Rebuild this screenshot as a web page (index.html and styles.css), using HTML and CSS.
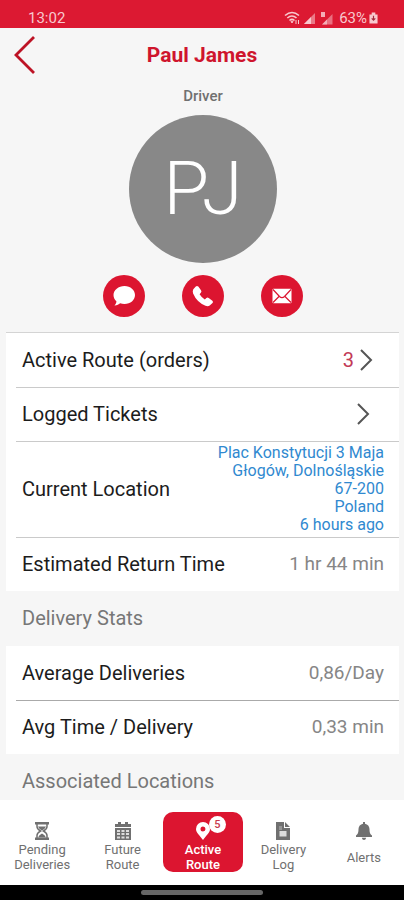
FILE: index.html
```html
<!DOCTYPE html>
<html lang="en">
<head>
<meta charset="utf-8">
<meta name="viewport" content="width=device-width, initial-scale=1">
<title>Paul James</title>
<link rel="stylesheet" href="styles.css">
</head>
<body>
<div class="status-bar">
  <span>13:02</span>
  <div class="status-icons">
    <svg width="16" height="14" viewBox="0 0 16 14" fill="none" stroke="currentColor" stroke-width="1.6" aria-hidden="true"><path d="M1 4.5Q8-1.5 15 4.5M3.3 7Q8 3 12.5 7M5.5 9.5Q8 7.2 10.5 9.5"/><path d="M7 10.3h2L8 12zM12 9v4M14.5 9v4" stroke-width="1"/></svg>
    <svg width="12" height="12" viewBox="0 0 12 12" fill="currentColor" aria-hidden="true"><path d="M0 12 11 1v11z" opacity=".55"/><path d="M0 12 7 5v7z"/></svg>
    <svg width="13" height="13" viewBox="0 0 13 13" fill="currentColor" aria-hidden="true"><path d="M1 0h4v5H1z" opacity=".85"/><path d="M2 12.500 12.500 2v10.500z" opacity=".5"/><path d="M2 12.500 7 7.500v5z" opacity=".7"/></svg>
    <span class="battery"><span>63%</span><svg width="9" height="12" viewBox="0 0 10 12" aria-hidden="true"><path d="M3 0h4v2h2.500v10h-9V2H3z" fill="currentColor"/><path d="M5 3.500v5M3 6.500l2 2 2-2" fill="none" stroke="#a22a3c" stroke-width="1.300"/></svg></span>
  </div>
</div>

<main class="content">
  <header class="title-bar">
    <button class="back" aria-label="Back"><svg width="22" height="38" viewBox="0 0 22 38" fill="none" stroke="currentColor" stroke-width="2.800" aria-hidden="true"><path d="M20 1 2 19l18 18"/></svg></button>
    <h1>Paul James</h1>
  </header>

  <section class="profile">
    <p class="role">Driver</p>
    <div class="avatar">PJ</div>
    <div class="actions">
      <button class="action" aria-label="Message"><svg width="24" height="22" viewBox="0 0 24 22" fill="currentColor" aria-hidden="true"><path d="M12.500 1c6 0 10.500 4 10.500 9s-4.500 9-10.500 9c-1.600 0-3.100-.2-4.400-.7C6.800 19.600 4.700 20.600 2.500 20.500c1.200-1.200 1.900-2.600 1.900-4.300C2.600 14.600 1.500 12.400 1.500 10c0-5 5-9 11-9z"/></svg></button>
      <button class="action" aria-label="Call"><svg width="22" height="22" viewBox="0 0 22 22" fill="currentColor" aria-hidden="true"><path d="M1.300 4.300 3.800 1.500Q5 .4 6.300 1.600L9 5.300q.9 1.200 0 2.300L7.600 9.200q2 3.300 5.200 5.200l1.600-1.400q1.100-.9 2.300 0l3.700 2.700q1.200 1.200.1 2.400l-2.800 2.500q-1.700 1-4.200.2Q4.800 17.200 1.100 8.500.3 6 1.300 4.300z"/></svg></button>
      <button class="action" aria-label="Email"><svg width="20" height="16" viewBox="0 0 20 16" aria-hidden="true"><rect x=".5" y=".8" width="19" height="14.400" rx="1" fill="currentColor"/><path d="m1 1.500 6.500 7q2.500 2.200 5 0l6.500-7M1 14.500l6.500-6.500M19 14.500l-6.500-6.500" fill="none" stroke="#dc1530" stroke-width="1.200"/></svg></button>
    </div>
  </section>

  <ul class="card card-lined">
    <li><button class="row"><span>Active Route (orders)</span><span class="count">3<svg width="13" height="22" viewBox="0 0 13 22" aria-hidden="true"><path d="m1 1 10 10L1 21"/></svg></span></button></li>
    <li><button class="row"><span>Logged Tickets</span><span class="open"><svg width="13" height="22" viewBox="0 0 13 22" aria-hidden="true"><path d="m1 1 10 10L1 21"/></svg></span></button></li>
    <li class="row row-tall"><span>Current Location</span><a class="address" href="#location">Plac Konstytucji 3 Maja<br>Głogów, Dolnośląskie<br>67-200<br>Poland<br>6 hours ago</a></li>
    <li class="row"><span>Estimated Return Time</span><span class="value">1 hr 44 min</span></li>
  </ul>

  <h2>Delivery Stats</h2>
  <ul class="card card-stats">
    <li class="row"><span>Average Deliveries</span><span class="value">0,86/Day</span></li>
    <li class="row"><span>Avg Time / Delivery</span><span class="value">0,33 min</span></li>
  </ul>

  <h2>Associated Locations</h2>
</main>

<nav class="tabs">
  <a class="tab" href="#pending"><svg width="14" height="18" viewBox="0 0 14 18" aria-hidden="true"><path d="M0 0h14v2.500H0zM0 15.500h14V18H0z" fill="currentColor"/><path d="M2 2v2.500Q2 7 5.500 9 2 11 2 13.500V16M12 2v2.500Q12 7 8.500 9q3.500 2 3.500 4.500V16" fill="none" stroke="currentColor" stroke-width="1.500"/><path d="M3 4.500h8Q10 7 7 8.500 4 7 3 4.500zM3 15.500Q4 13 7 11.500q3 1.500 4 4z" fill="currentColor"/></svg><span>Pending<br>Deliveries</span></a>
  <a class="tab" href="#future"><svg width="16" height="18" viewBox="0 0 16 18" aria-hidden="true"><path d="M3 0h3v2h4V0h3v2h3v3H0V2h3zM0 6h16v12H0z" fill="currentColor"/><path d="M2 8h3v2H2zM6.500 8h3v2h-3zM11 8h3v2h-3zM2 11h3v2H2zM6.500 11h3v2h-3zM11 11h3v2h-3zM2 14.500h3v2H2zM6.500 14.500h3v2h-3zM11 14.500h3v2h-3z" fill="#ddd"/></svg><span>Future<br>Route</span></a>
  <a class="tab tab-active" href="#active" aria-current="page"><span class="pin"><svg width="14" height="18" viewBox="0 0 14 18" aria-hidden="true"><path d="M7 0a7 7 0 0 1 7 7c0 4-4 6.500-7 11C4 13.500 0 11 0 7a7 7 0 0 1 7-7zm0 4.500a2.500 2.500 0 1 0 0 5 2.500 2.500 0 0 0 0-5z" fill="currentColor" fill-rule="evenodd"/></svg><span class="badge">5</span></span><span>Active<br>Route</span></a>
  <a class="tab" href="#log"><svg width="14" height="18" viewBox="0 0 14 18" aria-hidden="true"><path d="M0 0h8v6h6v12H0zM9 0l5 5H9z" fill="currentColor"/><path d="M3.500 9h7v5.500h-7z" fill="#ddd"/><path d="M3 5h3M3 7h3" stroke="#bbb" fill="none"/></svg><span>Delivery<br>Log</span></a>
  <a class="tab tab-short" href="#alerts"><svg width="16" height="18" viewBox="0 0 16 18" aria-hidden="true"><path d="M7 0h2v1.700c2.700.5 4.500 2.600 4.500 5.300 0 4 .8 5.200 2.500 6.500v1.500H0v-1.500C1.700 12.200 2.500 11 2.500 7c0-2.700 1.800-4.800 4.500-5.300zM5.800 15.800h4.400Q9.700 18 8 18t-2.200-2.200z" fill="currentColor"/></svg><span>Alerts</span></a>
</nav>
<div class="system-bar"><div class="home-handle"></div></div>
</body>
</html>
```
FILE: styles.css
```css
* { box-sizing: border-box; }

body {
  margin: 0;
  height: 100vh;
  display: flex;
  flex-direction: column;
  background: #f6f6f6;
  color: #1c1c1c;
  font-family: Roboto, "Liberation Sans", sans-serif;
  font-size: 20px;
}

h1, h2, p, ul { margin: 0; padding: 0; }
ul { list-style: none; }
svg { display: block; flex: none; }
a { color: inherit; text-decoration: none; }

button {
  border: 0;
  padding: 0;
  background: none;
  color: inherit;
  font: inherit;
  cursor: pointer;
}

.status-bar {
  flex: none;
  display: flex;
  justify-content: space-between;
  align-items: center;
  height: 28px;
  padding: 8px 26px 0 28px;
  background: #dc1932;
  color: #f8c8ce;
  font-size: 15px;
  line-height: 20px;
}
.status-icons { display: flex; align-items: center; gap: 4px; }
.battery { display: flex; align-items: center; gap: 2px; margin-left: 2px; }

.content {
  flex: 1;
  min-height: 0;
  overflow-y: auto;
  scrollbar-width: none;
}

.title-bar {
  display: grid;
  grid-template-columns: 36px 1fr 36px;
  align-items: center;
  height: 54px;
}
.back { padding-left: 14px; color: #bd1325; }
h1 {
  color: #cf152d;
  font-size: 21px;
  font-weight: 700;
  line-height: 28px;
  text-align: center;
}

.profile {
  display: flex;
  flex-direction: column;
  align-items: center;
  padding: 4px 0 15px 2px;
}
.role {
  color: #707070;
  font-size: 15px;
  font-weight: 500;
  line-height: 20px;
}
.avatar {
  display: flex;
  align-items: center;
  justify-content: center;
  width: 148px;
  height: 148px;
  margin: 9px 0 12px;
  border-radius: 50%;
  background: #888;
  color: #fff;
  font-size: 74px;
  font-weight: 300;
  line-height: 74px;
}
.actions { display: flex; gap: 37px; }
.action {
  display: flex;
  align-items: center;
  justify-content: center;
  width: 42px;
  height: 42px;
  border-radius: 50%;
  background: #dc1530;
  color: #fff;
}

.card { margin: 0 5px 0 6px; background: #fff; }
.card-lined { border-top: 1px solid #d4d4d4; }
.card li { position: relative; }
.card li + li::before {
  content: "";
  position: absolute;
  top: 0;
  left: 10px;
  right: 0;
  height: 1px;
  background: #cacaca;
}
.card-stats li + li::before { background: #aaa; }

.row {
  display: flex;
  justify-content: space-between;
  align-items: center;
  width: 100%;
  height: 54px;
  padding: 0 15px 0 16px;
  line-height: 24px;
  text-align: left;
}
.row-tall { height: 96px; }
.row svg { fill: none; stroke: #555; stroke-width: 2; }
.value { color: #868686; font-size: 19px; }
.count {
  display: flex;
  align-items: center;
  gap: 6px;
  margin-right: 11px;
  color: #c23a56;
}
.open { margin-right: 14px; }
.address {
  color: #3089d0;
  font-size: 16px;
  line-height: 18px;
  text-align: right;
}

h2 {
  padding: 0 22px;
  color: #777;
  font-size: 20px;
  font-weight: 400;
  line-height: 55px;
}

.tabs {
  flex: none;
  display: grid;
  grid-template-columns: repeat(5, 1fr);
  height: 85px;
  padding: 12px 0 13px 2px;
  background: #fff;
  color: #707070;
  font-size: 13px;
  line-height: 15px;
  text-align: center;
}
.tab {
  display: flex;
  flex-direction: column;
  align-items: center;
  gap: 2px;
  padding-top: 10px;
}
.tab-short { gap: 10px; }
.tab-active {
  border-radius: 10px;
  background: #dc1530;
  color: #fff;
  font-weight: 500;
}
.pin { position: relative; }
.badge {
  position: absolute;
  top: -6px;
  left: 13px;
  width: 17px;
  height: 17px;
  border-radius: 50%;
  background: #fff;
  color: #c83a4c;
  font-size: 11px;
  line-height: 17px;
}

.system-bar {
  flex: none;
  display: flex;
  justify-content: center;
  height: 15px;
  padding-top: 5px;
  background: #000;
}
.home-handle {
  width: 30%;
  height: 5px;
  border-radius: 3px;
  background: #666;
}
```
